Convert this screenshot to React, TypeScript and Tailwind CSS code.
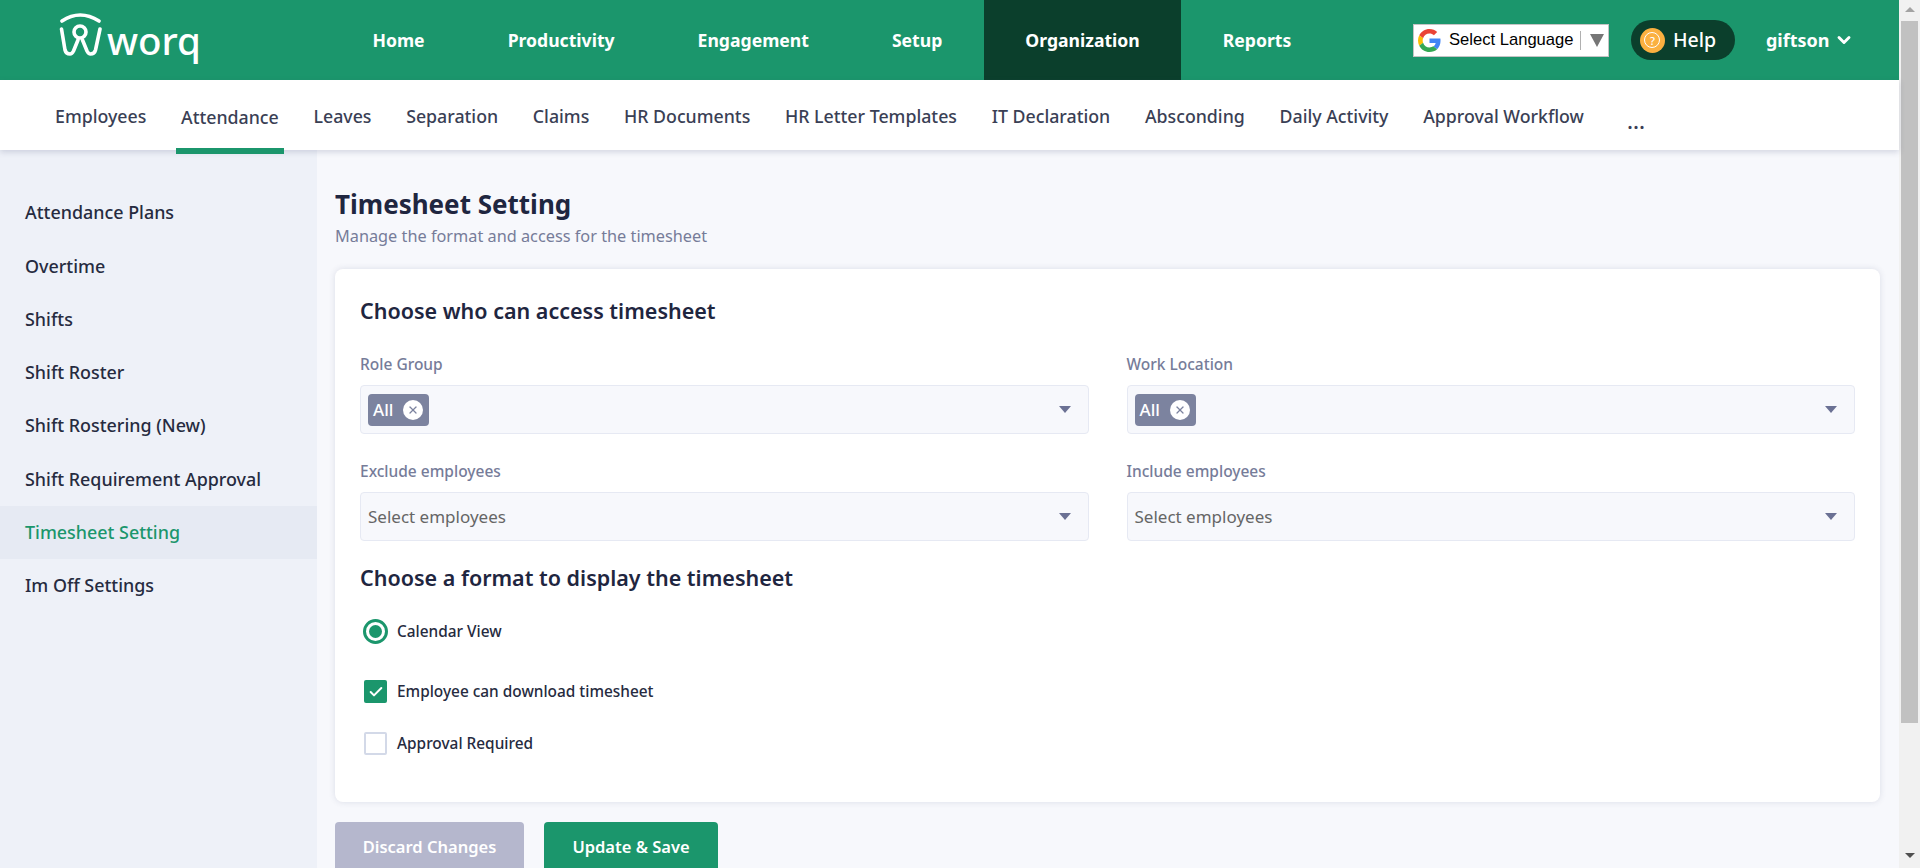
import { Check, ChevronDown, X } from 'lucide-react'

const topLinks = ['Home', 'Productivity', 'Engagement', 'Setup', 'Organization', 'Reports']
const subLinks = [
  'Employees',
  'Attendance',
  'Leaves',
  'Separation',
  'Claims',
  'HR Documents',
  'HR Letter Templates',
  'IT Declaration',
  'Absconding',
  'Daily Activity',
  'Approval Workflow',
]
const sideLinks = [
  'Attendance Plans',
  'Overtime',
  'Shifts',
  'Shift Roster',
  'Shift Rostering (New)',
  'Shift Requirement Approval',
  'Timesheet Setting',
  'Im Off Settings',
]

function Logo() {
  return (
    <div className="flex items-center">
      <svg width="44" height="56" viewBox="0 0 44 56" fill="none" stroke="white" strokeWidth="3.6" strokeLinecap="round" strokeLinejoin="round">
        <path d="M4 9Q22 -3 41 9" />
        <path d="M3.500 17L7 38Q8 42 12 42Q14 42 15.500 39L20 28" />
        <path d="M42 17L37.500 38Q36.500 42 32.500 42Q30.500 42 29 39L24.500 28" />
        <circle cx="22" cy="20" r="6" />
      </svg>
      <span className="ml-[5px] mt-[1px] text-[38.500px] leading-none font-medium text-white">worq</span>
    </div>
  )
}

function GoogleG() {
  return (
    <svg width="23" height="23" viewBox="0 0 48 48">
      <path fill="#EA4335" d="M24 9.5c3.5 0 6.7 1.2 9.2 3.6l6.9-6.9C35.9 2.4 30.5 0 24 0 14.6 0 6.5 5.4 2.6 13.2l8 6.2C12.5 13.7 17.8 9.5 24 9.5z" />
      <path fill="#4285F4" d="M47 24.5c0-1.6-.1-3.100-.4-4.500H24v9h12.900c-.6 3-2.200 5.500-4.800 7.200l7.800 6C44.400 38.100 47 31.900 47 24.500z" />
      <path fill="#FBBC05" d="M10.600 28.600c-.5-1.400-.8-3-.8-4.600s.3-3.200.8-4.600l-8-6.200C1 16.500 0 20.100 0 24s1 7.500 2.600 10.800l8-6.200z" />
      <path fill="#34A853" d="M24 48c6.500 0 11.900-2.100 15.900-5.800l-7.800-6c-2.100 1.500-4.900 2.300-8.100 2.300-6.200 0-11.500-4.200-13.400-9.900l-8 6.200C6.500 42.600 14.600 48 24 48z" />
    </svg>
  )
}

function Field({ label, tag, placeholder }: { label: string; tag?: boolean; placeholder?: string }) {
  return (
    <div className="flex flex-col">
      <label className="text-[15.5px] leading-[20px] font-medium text-[#767c99]">{label}</label>
      <div className="mt-[11px] flex h-[49px] items-center justify-between rounded-[4px] border border-[#e6e9f3] bg-[#f7f8fc] pl-[7px] pr-[17px]">
        {tag ? (
          <span className="flex h-[32px] items-center rounded-[4px] bg-[#7c839f] pl-[5px] pr-[6px] text-[17px] font-medium text-white">
            All
            <span className="ml-[10px] flex size-[20px] items-center justify-center rounded-full bg-white">
              <X size={12} strokeWidth={2.5} className="text-[#7c839f]" />
            </span>
          </span>
        ) : (
          <span className="text-[17px] text-[#666666]">{placeholder}</span>
        )}
        <span className="h-0 w-0 border-x-[6px] border-t-[7px] border-x-transparent border-t-[#6b7194]" />
      </div>
    </div>
  )
}

export default function App() {
  return (
    <div className="flex h-[868px] w-full overflow-hidden font-['Noto_Sans',sans-serif]">
      <div className="flex min-w-0 flex-1 flex-col">
        <header className="flex h-[80px] shrink-0 items-center bg-[#1b966c] pr-[45.500px]">
          <div className="w-[331px] shrink-0 pl-[58px]">
            <Logo />
          </div>
          <nav className="flex h-full">
            {topLinks.map((link) => (
              <a
                key={link}
                className={`flex h-full items-center px-[41.500px] text-[17.600px] font-bold text-white ${link === 'Organization' ? 'bg-[#0b3f2c]' : ''}`}
              >
                {link}
              </a>
            ))}
          </nav>
          <div className="ml-auto flex items-center">
            <div className="flex h-[33px] w-[196px] items-center border border-[#c4c4c4] bg-white pl-[4px] font-['Liberation_Sans',sans-serif] text-[16.600px] text-black">
              <GoogleG />
              <span className="ml-[8px]">Select Language</span>
              <span className="ml-[6px] h-[19px] w-px bg-[#b0b0b0]" />
              <span className="ml-[9px] h-0 w-0 border-x-[7px] border-t-[13px] border-x-transparent border-t-[#767676]" />
            </div>
            <button className="ml-[22px] flex h-[40px] w-[104px] items-center rounded-full bg-[#0b3f2c] pl-[9px] text-[19.500px] font-medium text-white">
              <span className="flex size-[25px] items-center justify-center rounded-full bg-[#fbb040]">
                <span className="flex size-[16px] items-center justify-center rounded-full border border-white text-[11px] leading-none text-white">?</span>
              </span>
              <span className="ml-[8px]">Help</span>
            </button>
            <div className="ml-[31px] flex items-center text-[18px] font-bold text-white">
              giftson
              <ChevronDown size={20} strokeWidth={3.5} className="ml-[4px]" />
            </div>
          </div>
        </header>

        <nav className="z-10 flex h-[70px] shrink-0 items-stretch bg-white pl-[50px] shadow-[0_2px_6px_rgba(60,70,110,0.2)]">
          <div className="flex gap-[24.700px]">
            {subLinks.map((link) => (
              <a
                key={link}
                className={`flex h-[74px] items-center px-[5px] pb-[2px] text-[17.750px] font-medium text-[#3a3f55] ${link === 'Attendance' ? 'border-b-[6px] border-[#1b966c] pt-[8px]' : ''}`}
              >
                {link}
              </a>
            ))}
          </div>
          <span className="ml-[38px] mt-[24px] text-[22px] font-medium text-[#3a3f55]">...</span>
        </nav>

        <div className="flex min-h-0 flex-1">
          <aside className="w-[317px] shrink-0 bg-[#eef1f8] pt-[36px]">
            {sideLinks.map((link) => (
              <a
                key={link}
                className={`flex h-[53.300px] items-center pl-[25px] text-[17.900px] font-medium ${link === 'Timesheet Setting' ? 'bg-[#e6eaf3] text-[#1b966c]' : 'text-[#262b40]'}`}
              >
                {link}
              </a>
            ))}
          </aside>

          <main className="flex-1 overflow-hidden bg-[#f7f8fc] pl-[18px] pr-[19px] pt-[36px]">
            <h1 className="text-[26px] leading-[36px] font-bold text-[#1f2640]">Timesheet Setting</h1>
            <p className="mt-[4px] text-[16.300px] leading-[20px] text-[#767c99]">Manage the format and access for the timesheet</p>

            <section className="mt-[23px] h-[533px] rounded-[8px] bg-white px-[25px] pt-[26px] shadow-[0_0_6px_rgba(60,70,110,0.15)]">
              <h2 className="text-[21.500px] leading-[32px] font-semibold text-[#1f2640]">Choose who can access timesheet</h2>
              <div className="mt-[27px] grid grid-cols-2 gap-x-[38px] gap-y-[27px]">
                <Field label="Role Group" tag />
                <Field label="Work Location" tag />
                <Field label="Exclude employees" placeholder="Select employees" />
                <Field label="Include employees" placeholder="Select employees" />
              </div>
              <h2 className="mt-[21px] text-[21.500px] leading-[32px] font-semibold text-[#1f2640]">Choose a format to display the timesheet</h2>

              <div className="mt-[25px] flex items-center pl-[3px]">
                <span className="flex size-[25px] items-center justify-center rounded-full border-[3px] border-[#1b966c]">
                  <span className="size-[13px] rounded-full bg-[#1b966c]" />
                </span>
                <span className="ml-[9px] text-[15.400px] font-medium text-[#262b40]">Calendar View</span>
              </div>
              <div className="mt-[36px] flex items-center pl-[4px]">
                <span className="flex size-[23px] items-center justify-center rounded-[2px] bg-[#1b966c]">
                  <Check size={16} strokeWidth={3} className="text-white" />
                </span>
                <span className="ml-[10px] text-[15.400px] font-medium text-[#262b40]">Employee can download timesheet</span>
              </div>
              <div className="mt-[29px] flex items-center pl-[4px]">
                <span className="size-[23px] rounded-[2px] border-2 border-[#d3d9e8] bg-white" />
                <span className="ml-[10px] text-[15.400px] font-medium text-[#262b40]">Approval Required</span>
              </div>
            </section>

            <div className="mt-[20px] flex gap-[20px]">
              <button className="h-[50px] w-[189px] rounded-[4px] bg-[#b5b7cd] text-[16.500px] font-semibold text-white">Discard Changes</button>
              <button className="h-[50px] w-[174px] rounded-[4px] bg-[#1b966c] text-[16.500px] font-semibold text-white">Update &amp; Save</button>
            </div>
          </main>
        </div>
      </div>

      {/* browser scrollbar */}
      <div className="flex w-[21px] shrink-0 flex-col items-center bg-[#f1f1f1]">
        <span className="mt-[7px] h-0 w-0 border-x-[5px] border-b-[5px] border-x-transparent border-b-[#a3a3a3]" />
        <span className="ml-[2px] mr-[2px] mt-[9px] h-[702px] w-[17px] bg-[#c1c1c1]" />
        <span className="mt-[130px] h-0 w-0 border-x-[5px] border-t-[5px] border-x-transparent border-t-[#505050]" />
      </div>
    </div>
  )
}
